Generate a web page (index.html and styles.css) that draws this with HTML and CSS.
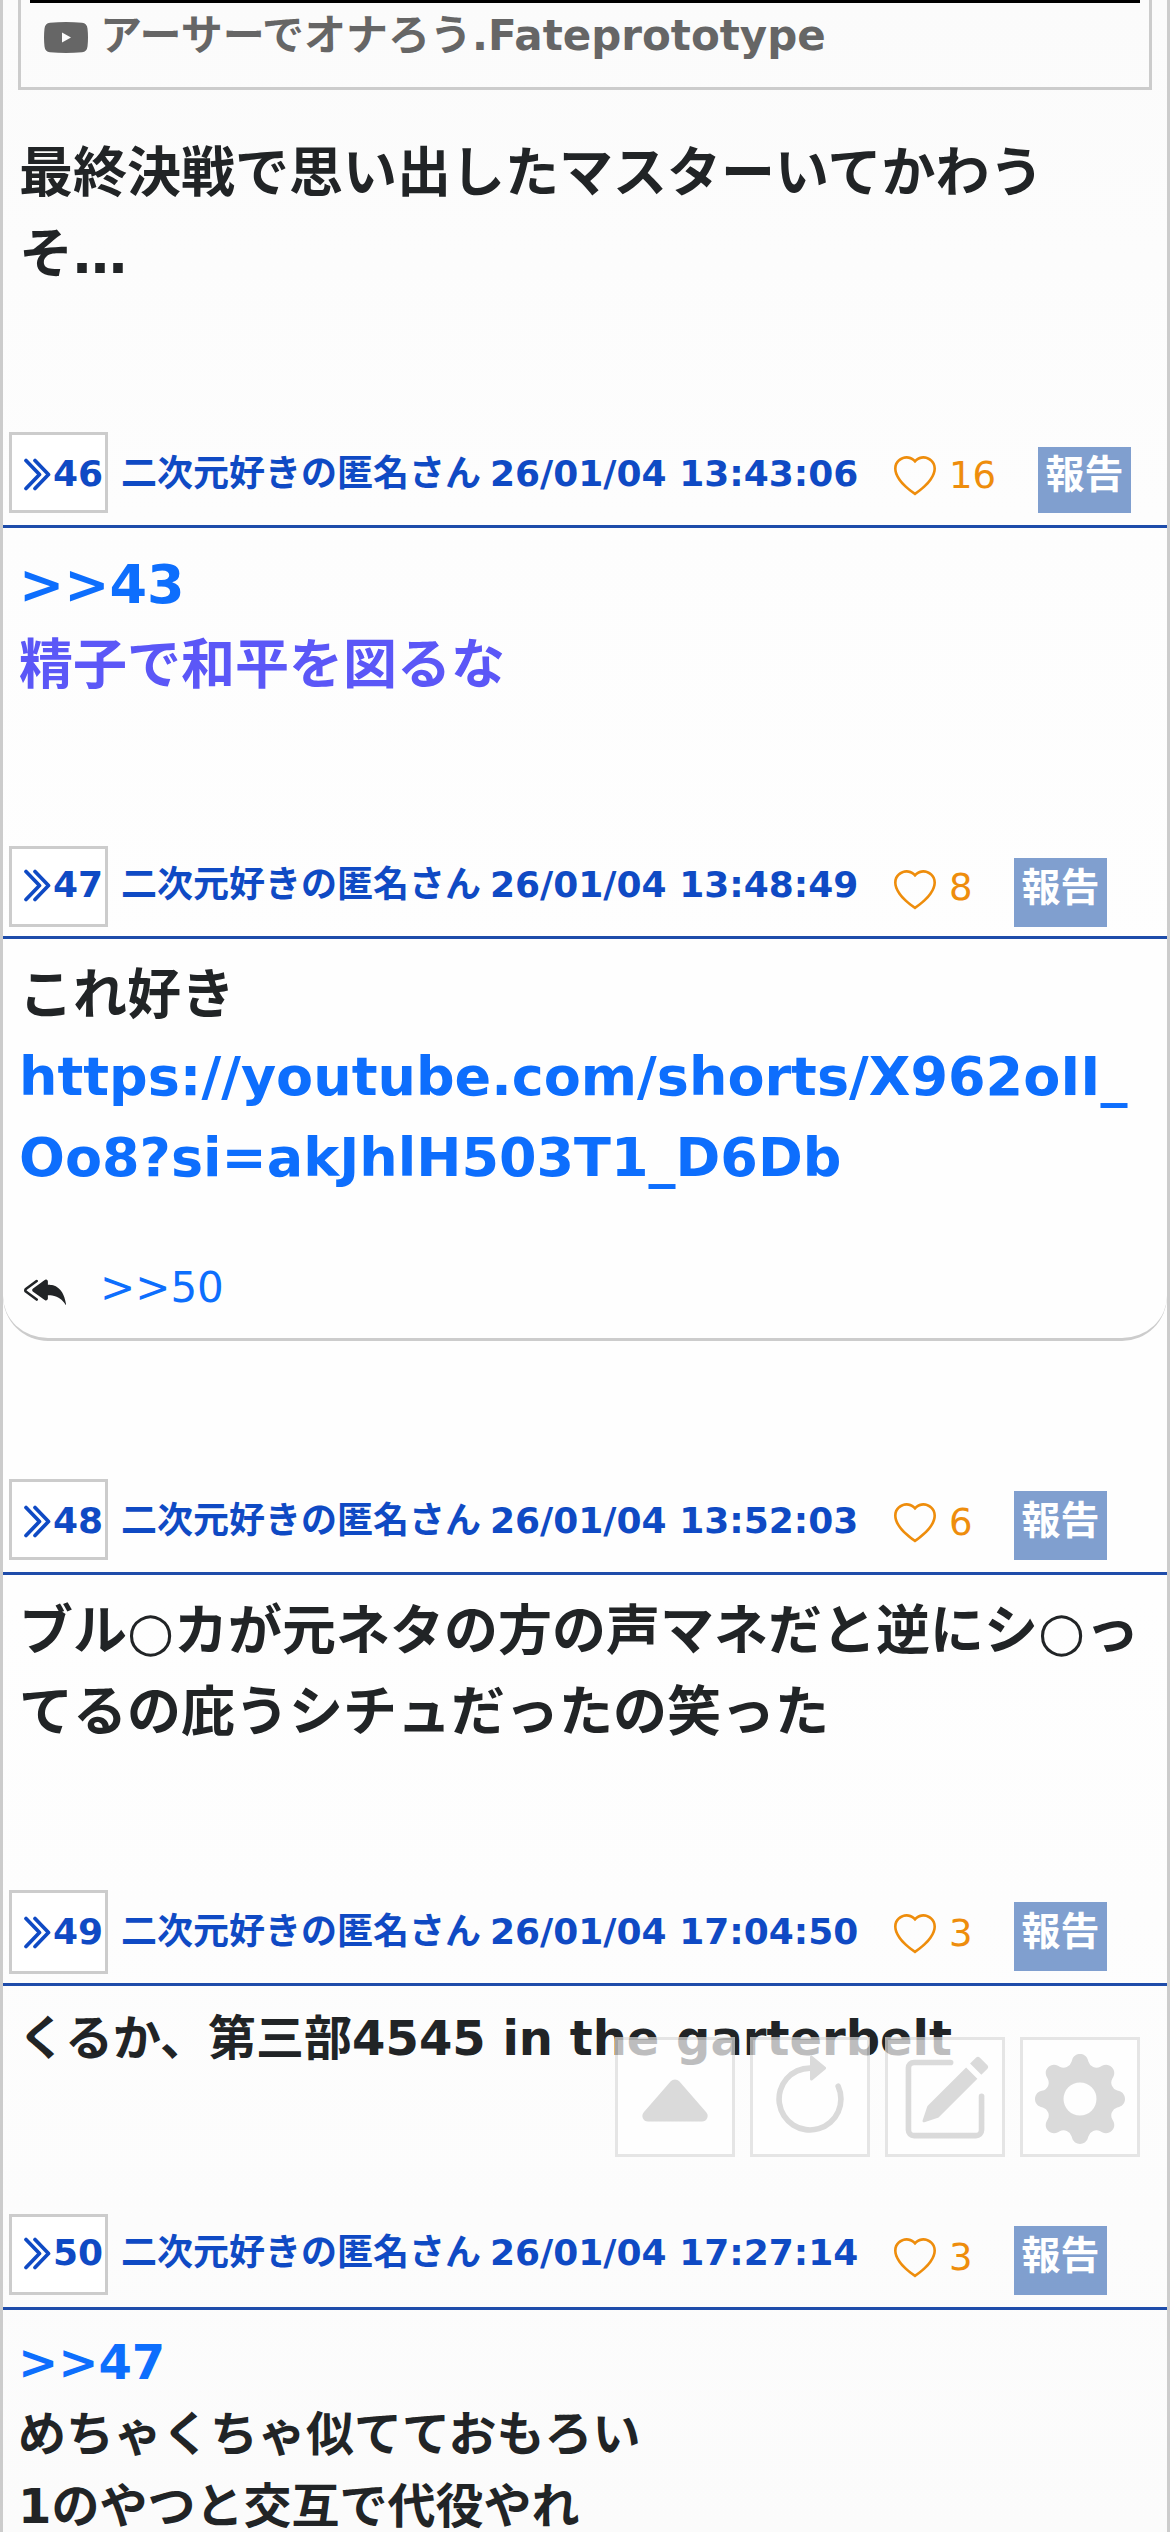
FILE: index.html
```html
<!DOCTYPE html>
<html lang="ja">
<head>
<meta charset="utf-8">
<title>掲示板</title>
<link rel="stylesheet" href="styles.css">
</head>
<body>
<svg class="defs" aria-hidden="true">
  <symbol id="heart" viewBox="0 0 16 16"><path d="m8 2.748-.717-.737C5.6.281 2.514.878 1.4 3.053c-.523 1.023-.641 2.5.314 4.385.92 1.815 2.834 3.989 6.286 6.357 3.452-2.368 5.365-4.542 6.286-6.357.955-1.886.838-3.362.314-4.385C13.486.878 10.4.28 8.717 2.01zM8 15C-7.333 4.868 3.279-3.04 7.824 1.143q.09.083.176.171a3 3 0 0 1 .176-.17C12.72-3.042 23.333 4.867 8 15z"/></symbol>
  <symbol id="chevrons" viewBox="0 0 27 33"><path d="M2 2.500 15.500 16.500 2 30.500M11 2.500 24.500 16.500 11 30.500" fill="none" stroke="currentColor" stroke-width="3.700" stroke-linecap="round" stroke-linejoin="round"/></symbol>
</svg>
<main class="thread">
  <article class="post post-45">
    <div class="video">
      <div class="video-frame"></div>
      <div class="video-title">
        <svg class="yt" viewBox="0 0 44 31"><path fill-rule="evenodd" d="M6 .8Q22-.8 38 .8 43 1.300 43.500 6.500 44.500 15.500 43.500 24.500 43 29.700 38 30.200 22 31.800 6 30.200 1 29.700 .5 24.500-.5 15.500 .5 6.500 1 1.300 6 .8zM18 10.500v10l9-5z"/></svg>
        <span>アーサーでオナろう.Fateprototype</span>
      </div>
    </div>
    <p class="body">最終決戦で思い出したマスターいてかわうそ…</p>
  </article>

  <article class="post post-46 low">
    <header class="head">
      <a class="num"><svg><use href="#chevrons"/></svg>46</a>
      <span class="meta"><span>二次元好きの匿名さん</span><time>26/01/04 13:43:06</time></span>
      <span class="like"><svg><use href="#heart"/></svg><span>16</span></span>
      <button class="report">報告</button>
    </header>
    <p class="body"><a>&gt;&gt;43</a><br><span class="violet">精子で和平を図るな</span></p>
  </article>

  <article class="post post-47">
    <header class="head">
      <a class="num"><svg><use href="#chevrons"/></svg>47</a>
      <span class="meta"><span>二次元好きの匿名さん</span><time>26/01/04 13:48:49</time></span>
      <span class="like"><svg><use href="#heart"/></svg><span>8</span></span>
      <button class="report">報告</button>
    </header>
    <div class="card">
      <p class="body">これ好き<br><a>https://youtube.com/shorts/X962oII_<wbr>Oo8?si=akJhlH503T1_D6Db</a></p>
      <div class="replies">
        <svg viewBox="0 0 16 16"><path d="M8.021 11.900 3.453 8.620a.72.72 0 0 1 0-1.238L8.021 4.100a.716.716 0 0 1 1.079.619V6c1.500 0 6 0 7 8-2.500-4.500-7-4-7-4v1.281c0 .56-.606.898-1.079.62z"/><path d="M5.232 4.293a.5.5 0 0 1-.106.7L1.114 7.945l-.042.028a.147.147 0 0 0 0 .252l.042.028 4.012 2.954a.5.5 0 1 1-.593.805L.539 9.073a1.147 1.147 0 0 1 0-1.946l3.994-2.940a.5.5 0 0 1 .699.106"/></svg>
        <a>&gt;&gt;50</a>
      </div>
    </div>
  </article>

  <article class="post post-48 low">
    <header class="head">
      <a class="num"><svg><use href="#chevrons"/></svg>48</a>
      <span class="meta"><span>二次元好きの匿名さん</span><time>26/01/04 13:52:03</time></span>
      <span class="like"><svg><use href="#heart"/></svg><span>6</span></span>
      <button class="report">報告</button>
    </header>
    <p class="body">ブル○カが元ネタの方の声マネだと逆にシ○ってるの庇うシチュだったの笑った</p>
  </article>

  <article class="post post-49 low">
    <header class="head">
      <a class="num"><svg><use href="#chevrons"/></svg>49</a>
      <span class="meta"><span>二次元好きの匿名さん</span><time>26/01/04 17:04:50</time></span>
      <span class="like"><svg><use href="#heart"/></svg><span>3</span></span>
      <button class="report">報告</button>
    </header>
    <p class="body small">くるか、第三部4545 in the garterbelt</p>
  </article>

  <article class="post post-50">
    <header class="head">
      <a class="num"><svg><use href="#chevrons"/></svg>50</a>
      <span class="meta"><span>二次元好きの匿名さん</span><time>26/01/04 17:27:14</time></span>
      <span class="like"><svg><use href="#heart"/></svg><span>3</span></span>
      <button class="report">報告</button>
    </header>
    <p class="body small"><a>&gt;&gt;47</a><br>めちゃくちゃ似てておもろい<br>1のやつと交互で代役やれ</p>
  </article>
</main>

<nav class="tools">
  <button aria-label="上へ"><svg viewBox="0 0 16 16"><path d="m7.247 4.860-4.796 5.481c-.566.647-.106 1.659.753 1.659h9.592a1 1 0 0 0 .753-1.659l-4.796-5.480a1 1 0 0 0-1.506 0z"/></svg></button>
  <button aria-label="更新"><svg viewBox="0 0 16 16"><path d="M8 3a5 5 0 1 0 4.546 2.914.5.5 0 0 1 .908-.417A6 6 0 1 1 8 2z"/><path d="M8 4.466V.534a.25.25 0 0 1 .41-.192l2.360 1.966c.12.1.12.284 0 .384L8.410 4.658A.25.25 0 0 1 8 4.466"/></svg></button>
  <button aria-label="書き込み"><svg viewBox="0 0 16 16"><path d="M15.502 1.940a.5.5 0 0 1 0 .706L14.459 3.690l-2-2L13.502.646a.5.5 0 0 1 .707 0l1.293 1.293zm-1.750 2.456-2-2L4.939 9.210a.5.5 0 0 0-.121.196l-.805 2.414a.25.25 0 0 0 .316.316l2.414-.805a.5.5 0 0 0 .196-.12l6.813-6.814z"/><path d="M1 13.500A1.500 1.500 0 0 0 2.500 15h11a1.500 1.500 0 0 0 1.500-1.500v-6a.5.5 0 0 0-1 0v6a.5.5 0 0 1-.5.5h-11a.5.5 0 0 1-.5-.5v-11a.5.5 0 0 1 .5-.5H9a.5.5 0 0 0 0-1H2.500A1.500 1.500 0 0 0 1 2.500z"/></svg></button>
  <button aria-label="設定"><svg viewBox="0 0 16 16"><path d="M9.405 1.050c-.413-1.400-2.397-1.400-2.810 0l-.1.34a1.464 1.464 0 0 1-2.105.872l-.31-.17c-1.283-.698-2.686.705-1.987 1.987l.169.311c.446.82.023 1.841-.872 2.105l-.34.1c-1.400.413-1.400 2.397 0 2.810l.34.1a1.464 1.464 0 0 1 .872 2.105l-.17.31c-.698 1.283.705 2.686 1.987 1.987l.311-.169a1.464 1.464 0 0 1 2.105.872l.1.34c.413 1.400 2.397 1.400 2.810 0l.1-.34a1.464 1.464 0 0 1 2.105-.872l.31.17c1.283.698 2.686-.705 1.987-1.987l-.169-.311a1.464 1.464 0 0 1 .872-2.105l.34-.1c1.400-.413 1.400-2.397 0-2.810l-.34-.1a1.464 1.464 0 0 1-.872-2.105l.17-.31c.698-1.283-.705-2.686-1.987-1.987l-.311.169a1.464 1.464 0 0 1-2.105-.872zM8 10.930a2.929 2.929 0 1 1 0-5.860 2.929 2.929 0 0 1 0 5.858z"/></svg></button>
</nav>
</body>
</html>
```
FILE: styles.css
```css
* { box-sizing: border-box; }
html, body { height: 2532px; overflow: hidden; }
body {
  margin: 0;
  background: #fff;
  color: #212426;
  font-family: "DejaVu Sans", "Noto Sans CJK JP", sans-serif;
}
p { margin: 0; }
svg { display: block; fill: currentColor; flex: none; }
button { font: inherit; border: 0; padding: 0; }
.defs { position: absolute; width: 0; height: 0; }

.thread {
  height: 2532px;
  overflow: hidden;
  border: solid #ccc;
  border-width: 0 3px;
  background: linear-gradient(#fbfbfb, #fdfdfd 520px, #fefefe 1000px, #fefefe 1600px, #fbfbfb 2532px);
}

.post-45 { height: 432px; }
.post-46 { height: 414px; }
.post-47 { height: 633px; }
.post-48 { height: 411px; }
.post-49 { height: 324px; }

.video {
  height: 90px;
  margin: 0 15px;
  padding: 0 9px;
  border: 3px solid #ccc;
  border-top: 0;
}
.video-frame { height: 3px; background: #000; }
.video-title {
  display: flex;
  padding: 0 0 0 14px;
  gap: 12px;
  font-size: 42px;
  font-weight: bold;
  line-height: 66px;
  color: #666;
}
.yt { width: 44px; height: 31px; margin-top: 19px; }

.body {
  padding: 16px 15px 0 16px;
  font-size: 54px;
  line-height: 81px;
  font-weight: bold;
}
.body.small { padding-left: 15px; font-size: 48px; line-height: 72px; }
.post-45 .body { padding-top: 43px; padding-right: 84px; }
.body a, .replies a { color: #0d6efd; }
.violet { color: #5b57f7; }

.head {
  display: flex;
  align-items: flex-start;
  height: 96px;
  padding-left: 6px;
  border-bottom: 3px solid #1e4caa;
}
.post-47 .head { height: 93px; }
.num, .meta, .like, .report { flex: none; }
.num {
  display: flex;
  width: 99px;
  height: 81px;
  padding-left: 12px;
  gap: 2px;
  border: 3px solid #ccc;
  background: #fff;
  color: #0f4ac4;
  font-size: 36px;
  font-weight: bold;
  line-height: 72px;
}
.num svg { width: 27px; height: 33px; margin-top: 20px; }
.post-49 .num { height: 84px; }
.meta {
  display: flex;
  width: 775px;
  padding-left: 13px;
  gap: 9px;
  white-space: nowrap;
  color: #0f4ac4;
  font-size: 36px;
  font-weight: bold;
  line-height: 78px;
}
.like {
  display: flex;
  width: 131px;
  padding-left: 11px;
  gap: 13px;
  color: #ee8d0c;
  font-size: 37px;
  line-height: 84px;
}
.like svg { width: 42px; height: 42px; margin-top: 24px; }
.report {
  width: 93px;
  height: 69px;
  margin-top: 12px;
  padding-bottom: 9px;
  background: #809fcf;
  color: #fff;
  font-size: 39px;
  font-weight: bold;
  line-height: 60px;
}
.low .num, .low .meta { line-height: 84px; }
.low .num { line-height: 78px; }
.low .num svg { margin-top: 23px; }
.low .like, .post-50 .like { line-height: 88px; }
.post-46 .like { width: 155px; }
.post-46 .report { height: 66px; margin-top: 15px; padding-bottom: 11px; line-height: 55px; }

.card {
  height: 402px;
  border-bottom: 3px solid #ccc;
  border-radius: 0 0 45px 45px;
  background: #fefefe;
}
.replies {
  display: flex;
  gap: 34px;
  padding: 59px 21px 0;
  font-size: 42px;
  line-height: 61px;
}
.replies svg { width: 42px; height: 42px; margin-top: 12px; }

.tools {
  position: absolute;
  left: 615px;
  top: 2037px;
  display: flex;
  gap: 15px;
  opacity: .7;
}
.tools button {
  width: 120px;
  height: 120px;
  padding: 14px 12px;
  border: 3px solid #dcdcdc;
  background: #fff;
  color: #ccc;
}
.tools svg { width: 90px; height: 90px; }
```
